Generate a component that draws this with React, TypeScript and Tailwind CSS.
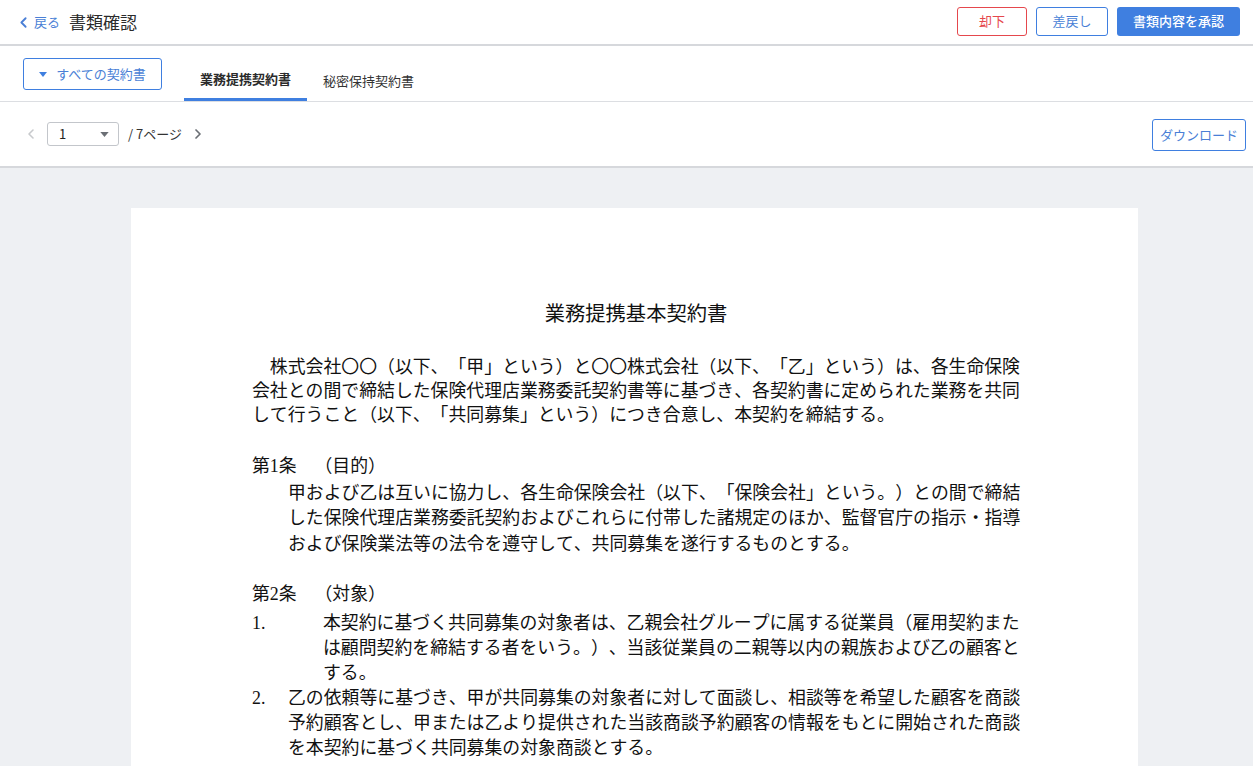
import { ChevronLeft, ChevronRight } from 'lucide-react'

const sans = { fontFamily: '"Noto Sans CJK JP", "Noto Sans", sans-serif' }
const serif = { fontFamily: '"Liberation Serif", "Noto Sans CJK JP", serif' }

function Caret({ className = '' }: { className?: string }) {
  return (
    <svg viewBox="0 0 10 6" className={className} fill="currentColor">
      <path d="M0 0h10L5 6z" />
    </svg>
  )
}

export default function App() {
  return (
    <div className="w-[1253px] h-[766px] overflow-hidden bg-[#eef0f3] flex flex-col" style={sans}>
      {/* header */}
      <header className="h-[46px] shrink-0 bg-white border-b-2 border-[#d6d8dc] flex items-center justify-between pl-[15px] pr-[13px]">
        <div className="flex items-center">
          <button className="flex items-center text-[#4a7fd6] text-[13px]">
            <ChevronLeft className="w-[17px] h-[17px]" strokeWidth={2.6} />
            <span className="ml-[2px]">戻る</span>
          </button>
          <h1 className="ml-[9px] text-[17px] text-[#2b2b2b]">書類確認</h1>
        </div>
        <div className="flex items-center gap-[9px] pb-[2px]">
          <button className="w-[70px] h-[29px] rounded-[3px] border border-[#e5484d] text-[#e5484d] text-[13px]">却下</button>
          <button className="w-[72px] h-[29px] rounded-[3px] border border-[#3f7fe0] text-[#4a7fd6] text-[13px]">差戻し</button>
          <button className="w-[123px] h-[29px] rounded-[3px] bg-[#3f7fe0] text-white text-[13px] font-medium">書類内容を承認</button>
        </div>
      </header>

      {/* tabs row */}
      <div className="h-[56px] shrink-0 bg-white border-b border-[#dcdee2] flex items-end pl-[23px]">
        <button className="mb-[11px] w-[139px] h-[32px] rounded-[3px] border border-[#3f7fe0] text-[#4a7fd6] text-[13px] flex items-center justify-center gap-[9px]">
          <Caret className="w-[8px] h-[5px] text-[#3f7fe0]" />
          <span>すべての契約書</span>
        </button>
        <div className="ml-[22px] flex">
          <div className="w-[123px] h-[44px] flex items-center justify-center border-b-[3px] border-[#3f7fe0] text-[13px] font-bold text-[#2b2b2b] pt-[3px]">業務提携契約書</div>
          <div className="w-[123px] h-[44px] flex items-center justify-center text-[13px] text-[#333] pt-[3px]">秘密保持契約書</div>
        </div>
      </div>

      {/* pagination row */}
      <div className="h-[66px] shrink-0 bg-white border-b-2 border-[#d6d8dc] flex items-center justify-between pl-[23px] pr-[7px]">
        <div className="flex items-center">
          <ChevronLeft className="w-[16px] h-[16px] text-[#c8cacd]" strokeWidth={2.4} />
          <div className="ml-[8px] w-[72px] h-[24px] rounded-[3px] border border-[#c3c6cb] flex items-center justify-between pl-[11px] pr-[9px] text-[13px] text-[#222]">
            <span>1</span>
            <Caret className="w-[9px] h-[5px] text-[#6b6f75]" />
          </div>
          <span className="ml-[9px] text-[13px] text-[#333]">/ 7ページ</span>
          <ChevronRight className="ml-[8px] w-[16px] h-[16px] text-[#6b6f75]" strokeWidth={2.6} />
        </div>
        <button className="mt-[2px] w-[94px] h-[32px] rounded-[3px] border border-[#3f7fe0] text-[#4a7fd6] text-[13px]">ダウンロード</button>
      </div>

      {/* document */}
      <div className="flex-1 overflow-hidden pt-[40px] pl-[131px]">
        <div className="w-[1007px] h-[600px] bg-white pt-[91px] pl-[121px] text-[#111] text-[17.86px] [text-spacing-trim:space-all] [font-kerning:none]" style={serif}>
          <h2 className="w-[768px] text-center text-[20.3px] leading-[30px]">業務提携基本契約書</h2>

          <div className="mt-[26px] leading-[24px]">
            <p>　株式会社〇〇（以下、「甲」という）と〇〇株式会社（以下、「乙」という）は、各生命保険</p>
            <p>会社との間で締結した保険代理店業務委託契約書等に基づき、各契約書に定められた業務を共同</p>
            <p>して行うこと（以下、「共同募集」という）につき合意し、本契約を締結する。</p>
          </div>

          <div className="mt-[27px] leading-[25.5px]">
            <p>第1条　（目的）</p>
            <div className="pl-[36px] mt-[1px]">
              <p>甲および乙は互いに協力し、各生命保険会社（以下、「保険会社」という。）との間で締結</p>
              <p>した保険代理店業務委託契約およびこれらに付帯した諸規定のほか、監督官庁の指示・指導</p>
              <p>および保険業法等の法令を遵守して、共同募集を遂行するものとする。</p>
            </div>
          </div>

          <div className="mt-[25px] leading-[25px]">
            <p>第2条　（対象）</p>
            <div className="flex mt-[4px]">
              <span className="w-[71px] shrink-0">1.</span>
              <div>
                <p>本契約に基づく共同募集の対象者は、乙親会社グループに属する従業員（雇用契約また</p>
                <p>は顧問契約を締結する者をいう。）、当該従業員の二親等以内の親族および乙の顧客と</p>
                <p>する。</p>
              </div>
            </div>
            <div className="flex">
              <span className="w-[36px] shrink-0">2.</span>
              <div>
                <p>乙の依頼等に基づき、甲が共同募集の対象者に対して面談し、相談等を希望した顧客を商談</p>
                <p>予約顧客とし、甲または乙より提供された当該商談予約顧客の情報をもとに開始された商談</p>
                <p>を本契約に基づく共同募集の対象商談とする。</p>
              </div>
            </div>
          </div>
        </div>
      </div>
    </div>
  )
}
